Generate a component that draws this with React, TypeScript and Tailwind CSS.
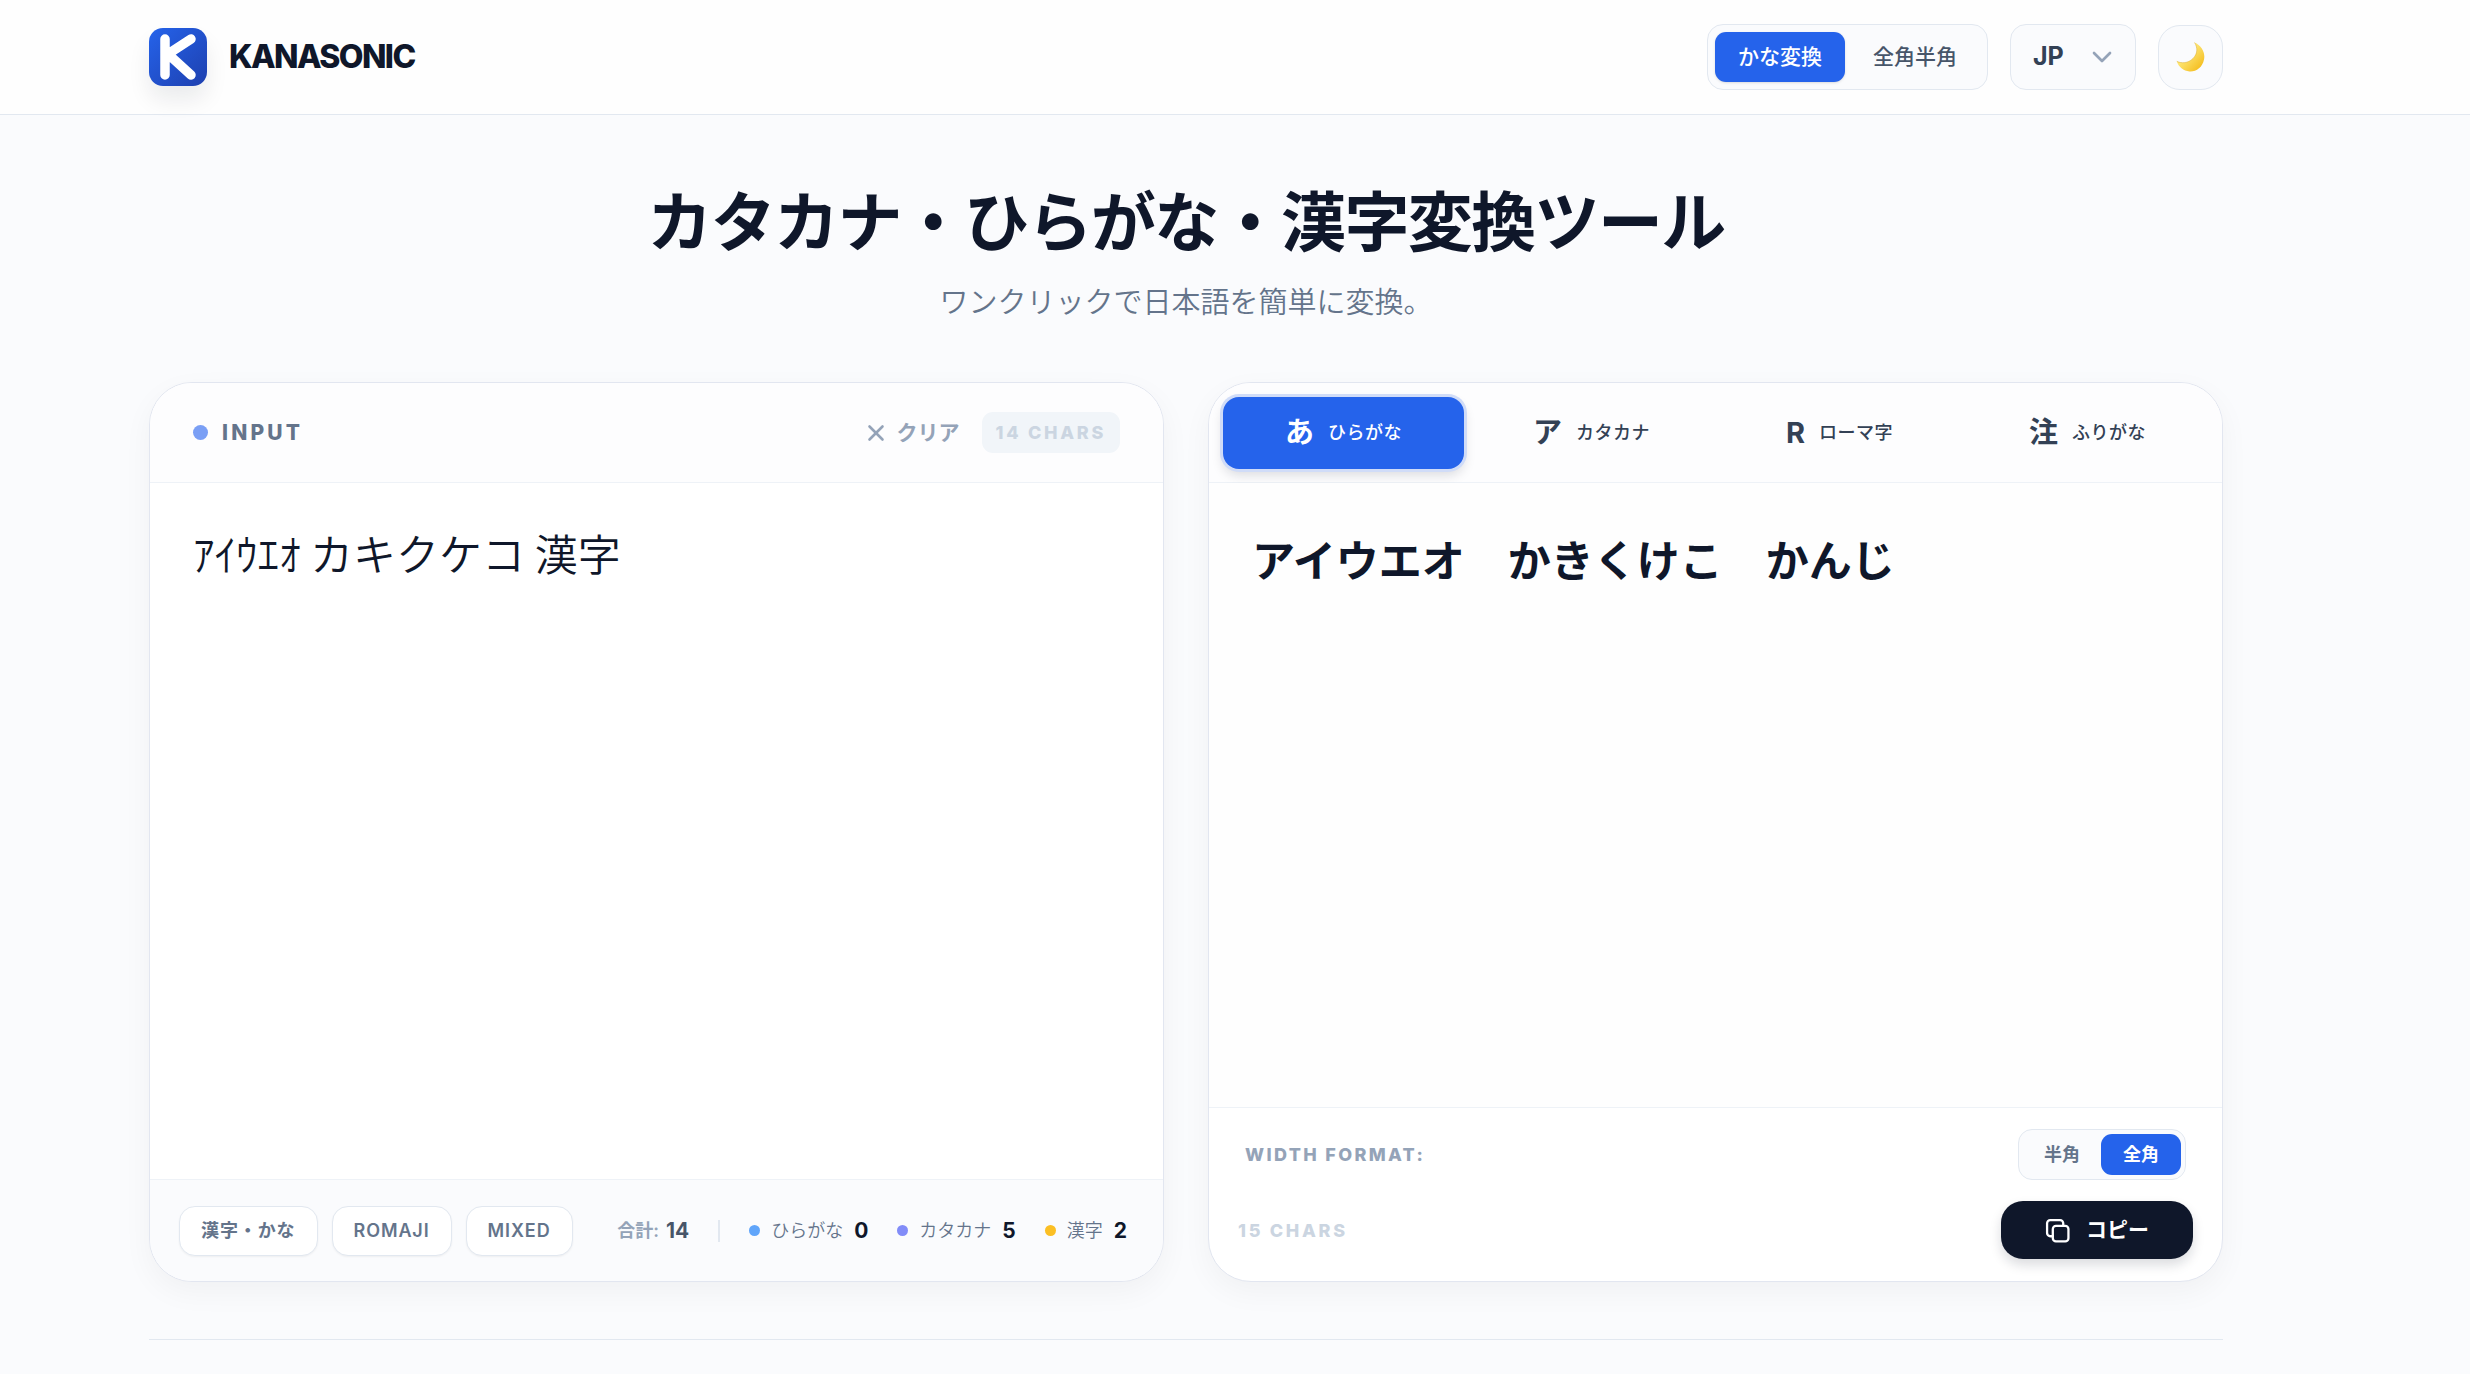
import { useState } from "react"
import { ChevronDown, X } from "lucide-react"

const MODES = ["かな変換", "全角半角"]
const EXAMPLES = ["漢字・かな", "ROMAJI", "MIXED"]
const WIDTHS = ["半角", "全角"]

const TABS = [
  { glyph: "あ", label: "ひらがな" },
  { glyph: "ア", label: "カタカナ" },
  { glyph: "R", label: "ローマ字" },
  { glyph: "注", label: "ふりがな" },
]

const STATS = [
  { label: "ひらがな", dot: "bg-[#60a5fa]", pattern: /[ぁ-ゖ]/g },
  { label: "カタカナ", dot: "bg-[#818cf8]", pattern: /[ァ-ヶ]/g },
  { label: "漢字", dot: "bg-[#fbbf24]", pattern: /[一-龯]/g },
]

const OUTPUT = "アイウエオ　かきくけこ　かんじ"

function Logo() {
  return (
    <svg viewBox="0 0 58 58" className="size-[58px] rounded-[14px] shadow-[0_14px_22px_rgba(15,23,42,0.08)]" aria-hidden="true">
      <defs>
        <linearGradient id="logo" x1="0" y1="0" x2="1" y2="1">
          <stop offset="0" stopColor="#2563eb" />
          <stop offset="1" stopColor="#1e40af" />
        </linearGradient>
      </defs>
      <rect width="58" height="58" fill="url(#logo)" />
      <path d="M16 11V47M42 11L19 26L42 47" fill="none" stroke="#fff" strokeWidth="9.5" strokeLinecap="round" strokeLinejoin="round" />
    </svg>
  )
}

function Moon() {
  return (
    <svg viewBox="0 0 29 32" className="h-8 w-[29px]" aria-hidden="true">
      <defs>
        <linearGradient id="moon" x1="0" y1="0" x2="1" y2="1">
          <stop offset="0.4" stopColor="#fde470" />
          <stop offset="0.85" stopColor="#f5c024" />
        </linearGradient>
      </defs>
      <path
        d="M18.5 1.5C25.5 4.5 29.5 11.5 28 18.5C26.5 26.5 20 31 13.5 30.5C7.500 30 2.500 26 .8 20.300C5 22.500 12 22.500 17 17.500C21.500 13 22 7 18.500 1.500Z"
        fill="url(#moon)"
      />
      <path d="M.8 20.300C5 22.500 12 22.500 17 17.500C21.500 13 22 7 18.500 1.500" fill="none" stroke="#d9a92c" strokeWidth="0.8" opacity="0.6" />
    </svg>
  )
}

function CopyIcon() {
  return (
    <svg viewBox="0 0 24 24" className="size-[25px]" fill="none" stroke="currentColor" strokeWidth="2.2" strokeLinecap="round" strokeLinejoin="round" aria-hidden="true">
      <rect x="7.500" y="7.500" width="15" height="15" rx="3" />
      <path d="M7.500 17.500H5a3 3 0 0 1-3-3V5a3 3 0 0 1 3-3h9.500a3 3 0 0 1 3 3v2.500" />
    </svg>
  )
}

export default function App() {
  const [mode, setMode] = useState(MODES[0])
  const [tab, setTab] = useState("ひらがな")
  const [width, setWidth] = useState("全角")
  const [text, setText] = useState("ｱｲｳｴｵ カキクケコ 漢字")

  return (
    <div className="min-h-screen bg-[#fafbfd] font-['Inter','Noto_Sans_CJK_JP',sans-serif] text-[#0f172a]">
      <header className="border-b border-[#e2e8f0] bg-[#fefefe] pr-[247px] pl-[149px]">
        <div className="flex h-[114px] items-center justify-between">
          <div className="flex items-center gap-[22px]">
            <Logo />
            <span className="text-[32px] font-extrabold tracking-tighter">KANASONIC</span>
          </div>
          <div className="flex items-center gap-[22px]">
            <nav className="flex gap-[5px] rounded-[16px] border border-[#e2e8f0] bg-[#fafbfd] p-[7px]">
              {MODES.map((m) => (
                <button
                  key={m}
                  onClick={() => setMode(m)}
                  className={
                    m === mode
                      ? "h-[50px] rounded-[11px] bg-[#2563eb] px-[23px] text-[21px] font-medium text-white shadow-sm"
                      : "h-[50px] rounded-[11px] px-[23px] text-[21px] font-medium text-[#475569]"
                  }
                >
                  {m}
                </button>
              ))}
            </nav>
            <div className="relative">
              <select
                aria-label="Language"
                defaultValue="JP"
                className="h-[66px] w-[126px] appearance-none rounded-[16px] border border-[#e2e8f0] bg-[#fafbfd] pl-[22px] text-[25px] font-bold text-[#334155]"
              >
                <option>JP</option>
                <option>EN</option>
              </select>
              <ChevronDown className="pointer-events-none absolute top-[17px] right-[18px] size-8 text-[#94a3b8]" />
            </div>
            <button aria-label="Dark mode" className="flex size-[65px] items-center justify-center rounded-[22px] border border-[#e2e8f0] bg-[#fafbfd]">
              <Moon />
            </button>
          </div>
        </div>
      </header>

      <main className="pr-[247px] pb-8 pl-[149px]">
        <div className="pt-[66px] pb-[58px] text-center">
          <h1 className="text-[65px] leading-[84px] font-bold tracking-tight">カタカナ・ひらがな・漢字変換ツール</h1>
          <p className="mt-4 text-[29px] leading-[43px] font-[350] text-[#64748b]">ワンクリックで日本語を簡単に変換。</p>
        </div>

        <div className="grid grid-cols-2 gap-11">
          <section className="flex flex-col overflow-hidden rounded-[43px] border border-[#e2e6f0] bg-white shadow-[0_10px_30px_rgba(0,0,0,0.045)]">
            <div className="flex h-[100px] items-center justify-between border-b border-[#eef2f7] bg-[#fdfdfe] px-[43px]">
              <label htmlFor="source" className="flex items-center gap-[14px] text-[21px] font-extrabold tracking-[0.15em] text-[#64748b]">
                <span className="size-[15px] rounded-full bg-[#7a9ff5]" />
                INPUT
              </label>
              <div className="flex items-center gap-[22px]">
                <button onClick={() => setText("")} className="flex items-center gap-[8px] text-[21px] font-semibold text-[#94a3b8]">
                  <X className="size-[26px]" strokeWidth={2.4} />
                  クリア
                </button>
                <span className="flex h-[41px] items-center rounded-[11px] bg-[#f1f5f9] px-[14px] text-[18px] font-extrabold tracking-[0.15em] text-[#cbd5e1]">
                  {text.length} CHARS
                </span>
              </div>
            </div>
            <textarea
              id="source"
              value={text}
              onChange={(e) => setText(e.target.value)}
              className="h-[696px] w-full resize-none px-[43px] py-[34px] font-['Noto_Sans_CJK_JP',sans-serif] text-[43px] leading-[70px] font-[350] outline-none"
            />
            <div className="flex h-[102px] items-center justify-between border-t border-[#eef2f7] bg-[#fafbfd] pr-[36px] pl-[29px]">
              <div className="flex gap-[14px]">
                {EXAMPLES.map((name) => (
                  <button
                    key={name}
                    className="h-[50px] rounded-[16px] border border-[#e2e8f0] bg-white px-[21px] text-[18px] font-semibold tracking-wider text-[#64748b] shadow-xs"
                  >
                    {name}
                  </button>
                ))}
              </div>
              <div className="flex items-center gap-[29px] text-[18px] text-[#64748b]">
                <span className="flex items-center gap-[7px] font-semibold text-[#94a3b8]">
                  合計: <b className="text-[21px] font-bold text-[#475569]">{text.length}</b>
                </span>
                <span className="h-[22px] w-[2px] bg-[#e2e8f0]" />
                {STATS.map((s) => (
                  <span key={s.label} className="flex items-center gap-[11px] font-[350]">
                    <span className={`size-[11px] rounded-full ${s.dot}`} />
                    {s.label}
                    <b className="text-[21px] font-bold text-[#0f172a]">{text.match(s.pattern)?.length ?? 0}</b>
                  </span>
                ))}
              </div>
            </div>
          </section>

          <section className="flex flex-col overflow-hidden rounded-[43px] border border-[#e2e6f0] bg-white shadow-[0_10px_30px_rgba(0,0,0,0.045)]">
            <div className="grid h-[100px] grid-cols-4 items-center gap-[7px] border-b border-[#eef2f7] bg-[#fdfdfe] px-[14px]">
              {TABS.map((t) => (
                <button
                  key={t.label}
                  onClick={() => setTab(t.label)}
                  className={
                    t.label === tab
                      ? "flex h-[72px] items-center justify-center gap-[14px] rounded-[16px] bg-[#2563eb] text-white shadow-[0_6px_12px_rgba(15,23,42,0.15)] ring-3 ring-[#d0dcf8]"
                      : "flex h-[72px] items-center justify-center gap-[14px] rounded-[16px] text-[#334155]"
                  }
                >
                  <span className="text-[29px] leading-none font-bold">{t.glyph}</span>
                  <span className="text-[18px] font-medium tracking-wide">{t.label}</span>
                </button>
              ))}
            </div>
            <output htmlFor="source" className="block h-[624px] bg-[#fefefe] px-[43px] py-[43px] text-[43px] leading-[70px] font-bold">
              {OUTPUT}
            </output>
            <div className="flex h-[174px] flex-col justify-between border-t border-[#eef2f7] pt-[21px] pr-[29px] pb-[22px] pl-[29px]">
              <div className="flex items-center justify-between px-[7px]">
                <span className="text-[18px] font-extrabold tracking-[0.13em] text-[#94a3b8]">WIDTH FORMAT:</span>
                <div className="flex rounded-[14px] border border-[#e2e8f0] bg-[#fafbfd] p-1">
                  {WIDTHS.map((w) => (
                    <button
                      key={w}
                      onClick={() => setWidth(w)}
                      className={
                        w === width
                          ? "h-[41px] rounded-[11px] bg-[#2563eb] px-[22px] text-[18px] font-semibold text-white"
                          : "h-[41px] rounded-[11px] px-[21px] text-[18px] font-semibold text-[#64748b]"
                      }
                    >
                      {w}
                    </button>
                  ))}
                </div>
              </div>
              <div className="flex items-center justify-between">
                <span className="text-[18px] font-extrabold tracking-[0.15em] text-[#cbd5e1]">{OUTPUT.length} CHARS</span>
                <button className="flex h-[58px] items-center gap-[16px] rounded-[22px] bg-[#0f172a] px-11 text-[21px] font-semibold text-white shadow-[0_6px_12px_rgba(15,23,42,0.15)]">
                  <CopyIcon />
                  コピー
                </button>
              </div>
            </div>
          </section>
        </div>

        <hr className="mt-[57px] border-t border-[#e2e8f0]" />
      </main>
    </div>
  )
}
